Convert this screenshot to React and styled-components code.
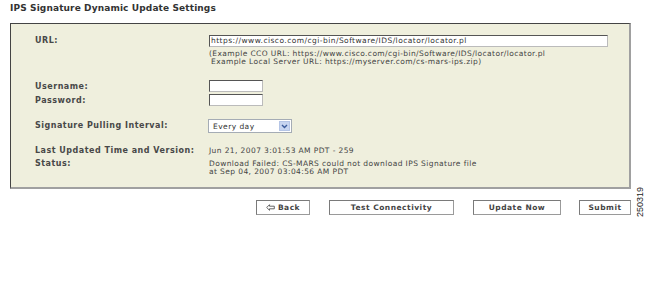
import React from "react";
import styled, { createGlobalStyle } from "styled-components";

const Global = createGlobalStyle`
  html, body { margin: 0; padding: 0; background: #ffffff; }
  body { font-family: "DejaVu Sans", Verdana, sans-serif; }
`;

const Page = styled.div`
  position: relative;
  width: 648px;
  height: 287px;
  padding: 3px 0 0 10px;
  box-sizing: border-box;
`;

const Title = styled.div`
  font-size: 9px;
  font-weight: bold;
  letter-spacing: 0.12px;
  color: #333333;
  height: 20px;
  line-height: 11px;
`;

const Panel = styled.div`
  width: 621px;
  height: 166px;
  box-sizing: border-box;
  background: #efefdd;
  border-top: 1px solid #444444;
  border-left: 1px solid #444444;
  border-right: 2px solid #a0a0a0;
  border-bottom: 2px solid #a0a0a0;
  padding: 11px 0 0 24px;
  display: flex;
  flex-direction: column;
`;

const Row = styled.div`
  display: grid;
  grid-template-columns: 174px 1fr;
  height: ${(p) => p.h}px;
  margin-top: ${(p) => p.mt || 0}px;
`;

const Label = styled.div`
  font-size: 8px;
  font-weight: bold;
  letter-spacing: 0.5px;
  color: #484848;
  line-height: ${(p) => p.lh || 12}px;
  white-space: nowrap;
`;

const Value = styled.div`
  display: flex;
  flex-direction: column;
`;

const TextInput = styled.div`
  width: ${(p) => p.w}px;
  height: 12px;
  box-sizing: border-box;
  background: #ffffff;
  border-top: 1px solid #555555;
  border-left: 1px solid #555555;
  border-right: 1px solid #bbbbbb;
  border-bottom: 1px solid #bbbbbb;
  font-size: 7.5px;
  letter-spacing: 0.45px;
  color: #333333;
  line-height: 10px;
  padding-left: 1px;
  white-space: nowrap;
  overflow: hidden;
`;

const Note = styled.div`
  font-size: 7.5px;
  letter-spacing: 0.4px;
  color: #444444;
  line-height: 8px;
  white-space: nowrap;
  padding-left: ${(p) => p.indent || 0}px;
`;

const Select = styled.div`
  width: 84px;
  height: 14px;
  box-sizing: border-box;
  margin-left: -1px;
  background: #ffffff;
  border: 1px solid #a5acb5;
  display: flex;
  align-items: center;
  justify-content: space-between;
  padding: 0 1px 0 4px;
  font-size: 7.5px;
  letter-spacing: 0.45px;
  color: #333333;
`;

const SelectArrow = styled.div`
  width: 11px;
  height: 10px;
  background: #c7d5f0;
  border: 1px solid #b5c5e6;
  box-sizing: border-box;
  display: flex;
  align-items: center;
  justify-content: center;
`;

const Data = styled.div`
  font-size: 7.5px;
  letter-spacing: 0.4px;
  color: #444444;
  line-height: ${(p) => p.lh || 8}px;
  white-space: nowrap;
`;

const ButtonBar = styled.div`
  display: flex;
  width: 621px;
  margin-top: 11px;
  padding-left: 246px;
  box-sizing: border-box;
`;

const Button = styled.div`
  width: ${(p) => p.w}px;
  height: 15px;
  margin-left: ${(p) => p.ml || 0}px;
  box-sizing: border-box;
  background: #ffffff;
  border: 1px solid #7a7a7a;
  border-right-color: #9a9a9a;
  border-bottom-color: #9a9a9a;
  display: flex;
  align-items: center;
  justify-content: center;
  gap: 3px;
  font-size: 7.5px;
  font-weight: bold;
  letter-spacing: 0.5px;
  color: #444444;
`;

const SideId = styled.div`
  position: absolute;
  left: 635px;
  top: 186px;
  height: 32px;
  width: 11px;
  writing-mode: vertical-rl;
  transform: rotate(180deg);
  font-family: "Liberation Sans", Arial, sans-serif;
  font-size: 9px;
  line-height: 11px;
  color: #222222;
  text-align: center;
`;

function BackArrow() {
  return (
    <svg width="9" height="7" viewBox="0 0 9 7">
      <path
        d="M0.7 3.5 L3.5 0.7 L3.5 2.2 L8.3 2.2 L8.3 4.8 L3.5 4.8 L3.5 6.3 Z"
        fill="none"
        stroke="#555"
        strokeWidth="0.9"
      />
    </svg>
  );
}

function Chevron() {
  return (
    <svg width="7" height="5" viewBox="0 0 7 5">
      <path d="M1 1 L3.5 3.5 L6 1" fill="none" stroke="#3a5a9a" strokeWidth="1.4" />
    </svg>
  );
}

export default function App() {
  return (
    <>
      <Global />
      <Page>
        <Title>IPS Signature Dynamic Update Settings</Title>
        <Panel>
          <Row h={32}>
            <Label lh={11}>URL:</Label>
            <Value>
              <TextInput w={399}>https://www.cisco.com/cgi-bin/Software/IDS/locator/locator.pl</TextInput>
              <Note style={{ marginTop: 3 }}>
                (Example CCO URL: https://www.cisco.com/cgi-bin/Software/IDS/locator/locator.pl
              </Note>
              <Note indent={2}>Example Local Server URL: https://myserver.com/cs-mars-ips.zip)</Note>
            </Value>
          </Row>
          <Row h={13} mt={13}>
            <Label lh={13}>Username:</Label>
            <Value>
              <TextInput w={54}> </TextInput>
            </Value>
          </Row>
          <Row h={13} mt={1}>
            <Label lh={13}>Password:</Label>
            <Value>
              <TextInput w={54}> </TextInput>
            </Value>
          </Row>
          <Row h={14} mt={12}>
            <Label lh={14}>Signature Pulling Interval:</Label>
            <Value>
              <Select>
                <span>Every day</span>
                <SelectArrow>
                  <Chevron />
                </SelectArrow>
              </Select>
            </Value>
          </Row>
          <Row h={12} mt={12}>
            <Label lh={12}>Last Updated Time and Version:</Label>
            <Value>
              <Data lh={12}>Jun 21, 2007 3:01:53 AM PDT - 259</Data>
            </Value>
          </Row>
          <Row h={18} mt={1}>
            <Label lh={12}>Status:</Label>
            <Value>
              <Data style={{ marginTop: 2 }}>
                Download Failed: CS-MARS could not download IPS Signature file
              </Data>
              <Data>at Sep 04, 2007 03:04:56 AM PDT</Data>
            </Value>
          </Row>
        </Panel>
        <ButtonBar>
          <Button w={54}>
            <BackArrow />
            Back
          </Button>
          <Button w={125} ml={19}>Test Connectivity</Button>
          <Button w={88} ml={19}>Update Now</Button>
          <Button w={52} ml={18}>Submit</Button>
        </ButtonBar>
        <SideId>250319</SideId>
      </Page>
    </>
  );
}
